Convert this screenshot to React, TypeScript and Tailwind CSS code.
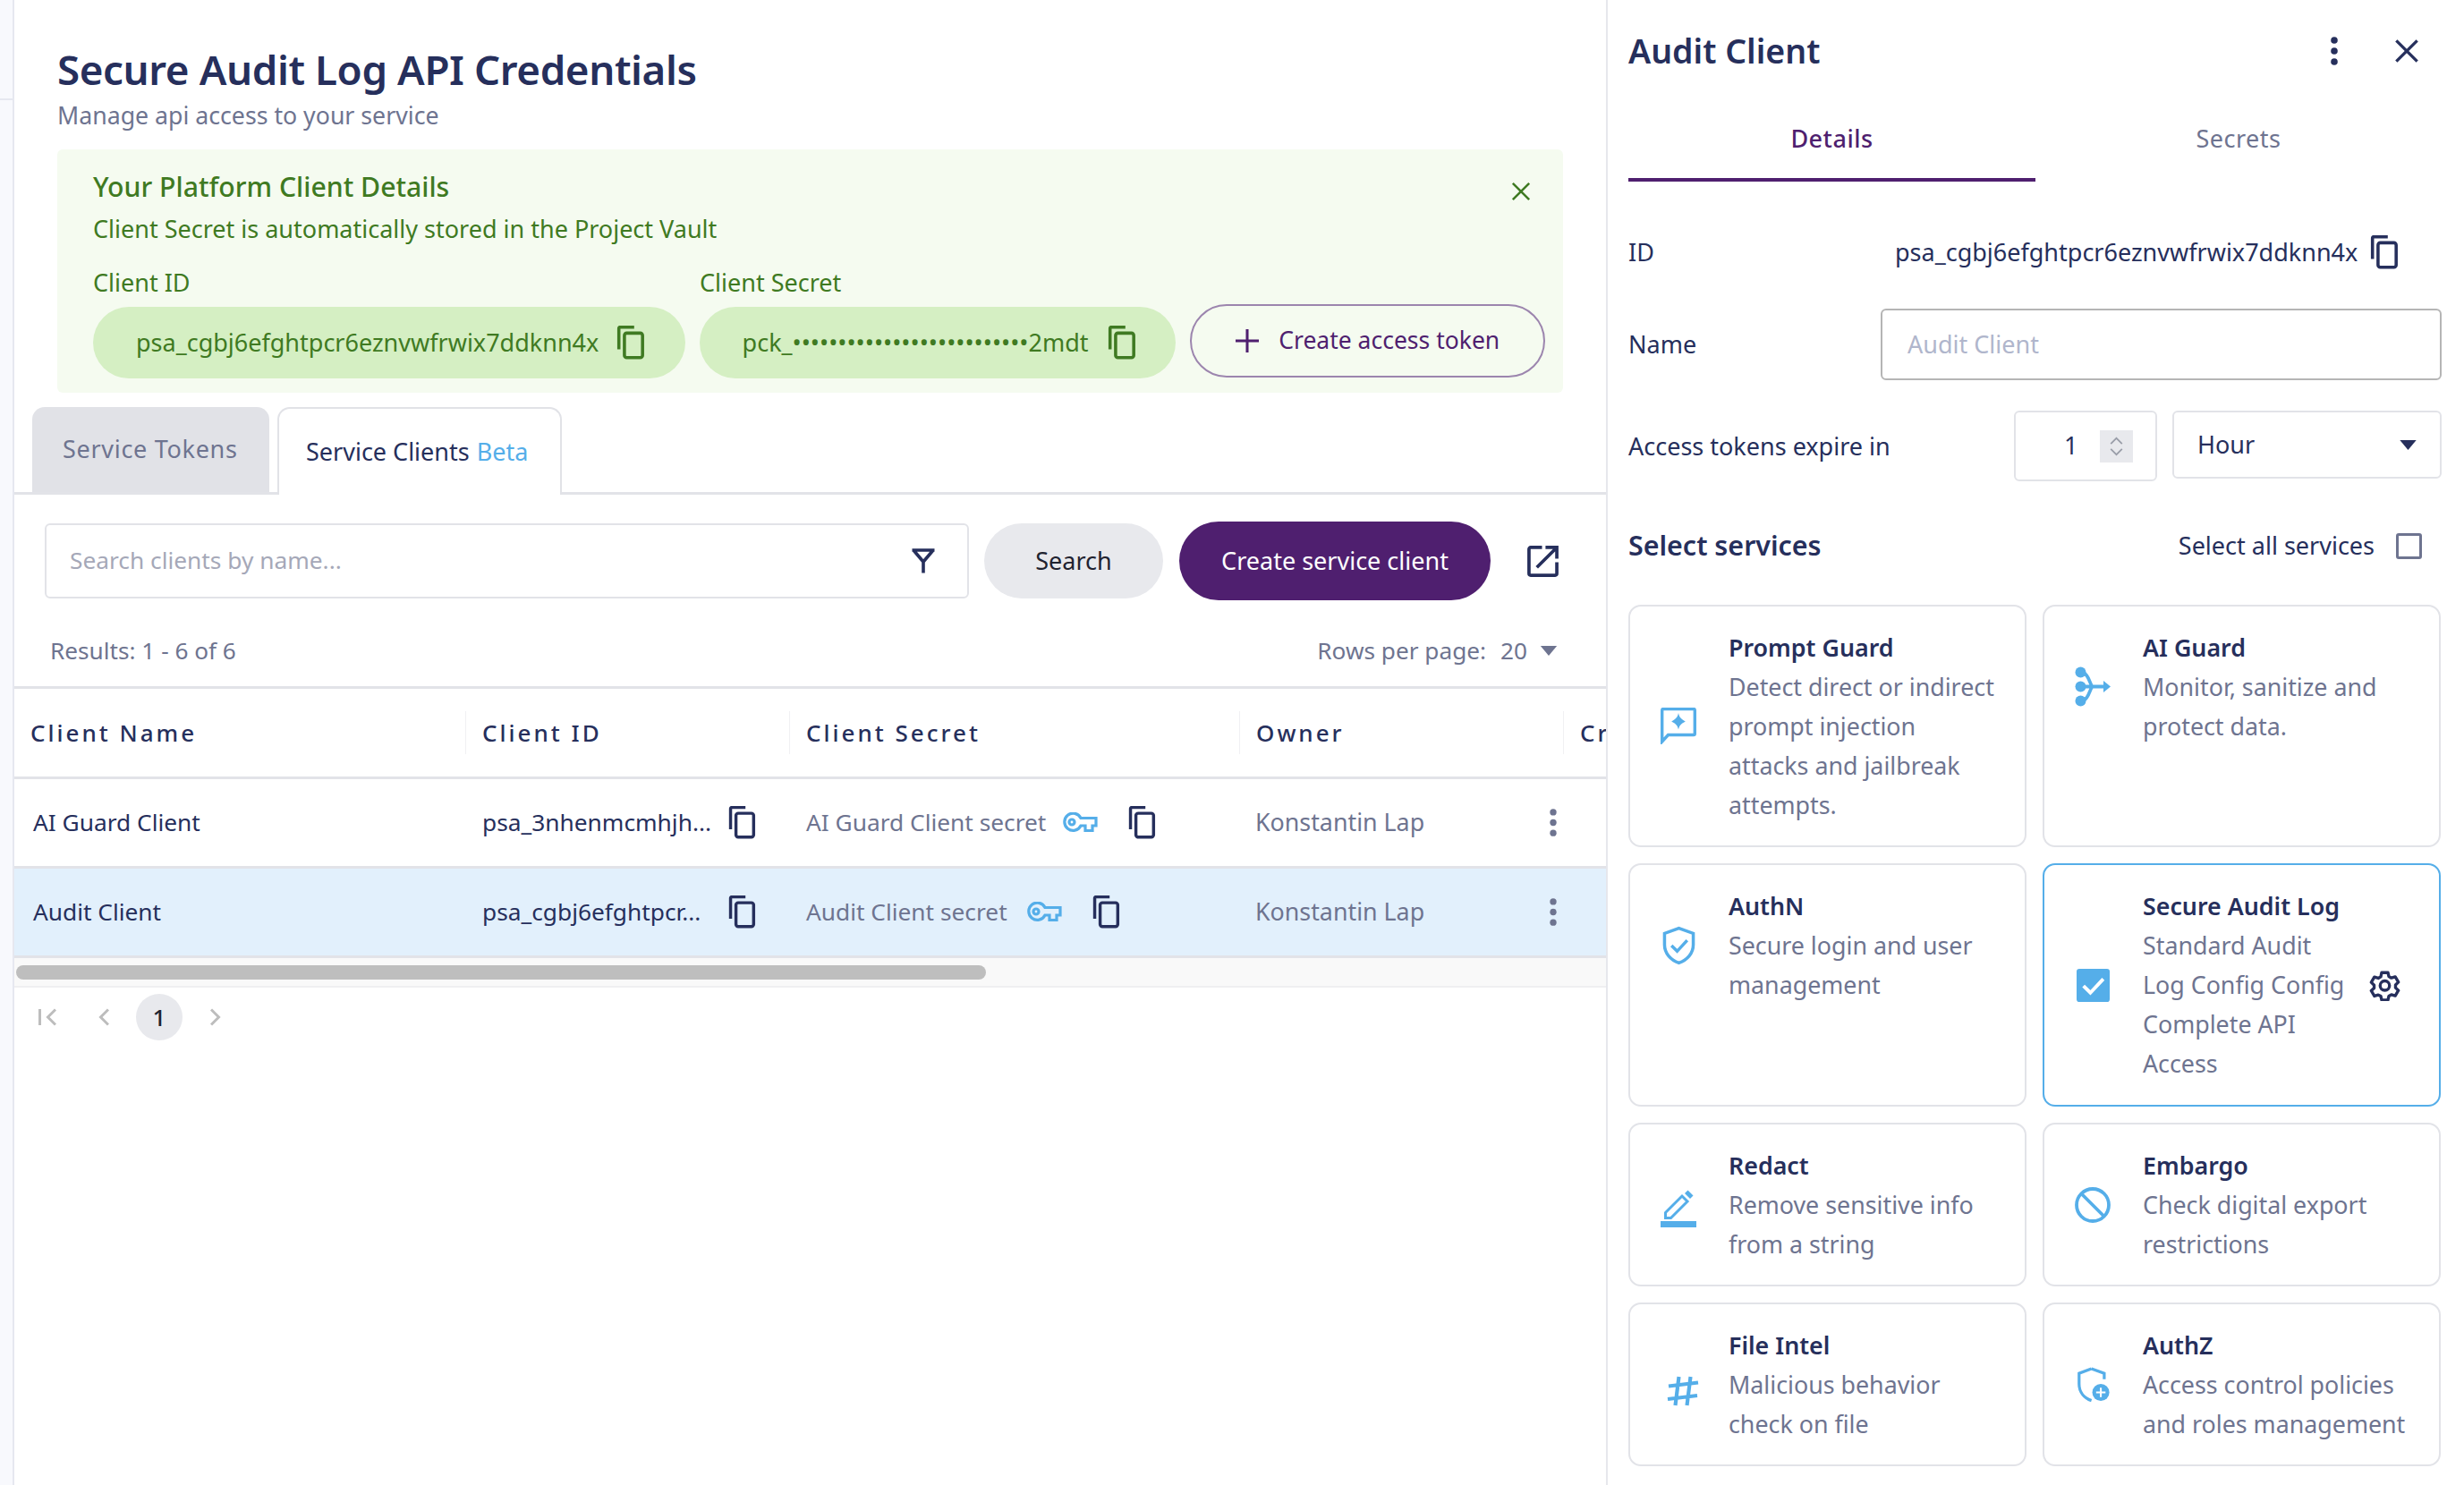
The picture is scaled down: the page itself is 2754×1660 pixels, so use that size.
import type { ReactNode } from "react";

type IconProps = { className?: string };

function CopyIcon({ className = "" }: IconProps) {
  return (
    <svg viewBox="0 0 24 30" fill="none" stroke="currentColor" strokeWidth="2.8" className={className}>
      <path d="M1.5 21V2.5a1.2 1.2 0 0 1 1.2-1.2H15" />
      <rect x="6.4" y="6.6" width="16" height="21.6" rx="2" />
    </svg>
  );
}

function KebabIcon({ className = "" }: IconProps) {
  return (
    <svg viewBox="0 0 8 32" fill="currentColor" className={className}>
      <circle cx="4" cy="4" r="3.8" />
      <circle cx="4" cy="16" r="3.8" />
      <circle cx="4" cy="28" r="3.8" />
    </svg>
  );
}

function CloseIcon({ className = "" }: IconProps) {
  return (
    <svg viewBox="0 0 24 24" fill="none" stroke="currentColor" strokeWidth="2.8" className={className}>
      <path d="M2 2l20 20M22 2L2 22" />
    </svg>
  );
}

function KeyIcon({ className = "" }: IconProps) {
  return (
    <svg viewBox="0 0 40 24" fill="none" stroke="#55aee9" strokeWidth="3.2" className={className}>
      <path d="M21 6.5h17V15h-4v5.5h-8V15h-5a9.6 9.6 0 1 1 0-8.5z" />
      <circle cx="11" cy="11" r="3" />
    </svg>
  );
}

function Caret({ className = "" }: IconProps) {
  return (
    <svg viewBox="0 0 20 12" fill="currentColor" className={className}>
      <path d="M0 0h20L10 12z" />
    </svg>
  );
}

// icons for the service cards, all in the same blue
function SparkChatIcon() {
  return (
    <svg viewBox="0 0 40 41" className="h-[41px] w-10" fill="none">
      <path d="M1.7 38V3a1.5 1.5 0 0 1 1.500-1.500h33.600A1.500 1.500 0 0 1 38.300 3v26a1.500 1.500 0 0 1-1.500 1.500H8.500z" stroke="#55aee9" strokeWidth="3.400" />
      <path d="M20 6c1 4.800 3 6.800 7.800 9.500-4.800 2.400-6.800 4.600-7.800 9-1-4.400-3-6.600-7.800-9C17 12.800 19 10.800 20 6z" fill="#55aee9" />
    </svg>
  );
}

function MergeIcon() {
  return (
    <svg viewBox="0 0 40 45" className="h-[45px] w-10" fill="none" stroke="#55aee9" strokeWidth="3.800">
      <circle cx="6.500" cy="6.500" r="6" fill="#55aee9" stroke="none" />
      <circle cx="6.500" cy="22.500" r="6" fill="#55aee9" stroke="none" />
      <circle cx="6.500" cy="38.500" r="6" fill="#55aee9" stroke="none" />
      <path d="M6.500 6.500c10 0 10 16 14 16M6.500 38.500c10 0 10-16 14-16M6.500 22.500H35" />
      <path d="M32 16l8 6.500-8 6.500z" fill="#55aee9" stroke="none" />
    </svg>
  );
}

function ShieldCheckIcon() {
  return (
    <svg viewBox="0 0 38 44" className="h-[44px] w-[37px]" fill="none" stroke="#55aee9" strokeWidth="3.600">
      <path d="M19 2l16.500 6v13c0 10-7 17.500-16.500 21C9.500 38.500 2.500 31 2.500 21V8z" />
      <path d="M10.500 22l6.500 6.500L28.500 16" />
    </svg>
  );
}

function CheckedBox() {
  return (
    <svg viewBox="0 0 36 36" className="h-[37px] w-[37px]">
      <rect width="36" height="36" rx="3" fill="#55aee9" />
      <path d="M7.500 18.500l7.500 7.500L29 11" fill="none" stroke="#fff" strokeWidth="3.800" />
    </svg>
  );
}

function RedactIcon() {
  return (
    <svg viewBox="0 0 40 44" className="mt-[6px] h-[44px] w-10" fill="none">
      <path d="M5.500 27.500L24 9l6 6-18.500 18.500H5.500z" stroke="#55aee9" strokeWidth="3" />
      <path d="M27 6l3.500-3.500 6 6L33 12z" fill="#55aee9" />
      <rect y="37" width="40" height="7" fill="#55aee9" />
    </svg>
  );
}

function BlockIcon() {
  return (
    <svg viewBox="0 0 40 40" className="h-10 w-10" fill="none" stroke="#55aee9" strokeWidth="3.800">
      <circle cx="20" cy="20" r="18" />
      <path d="M7.500 7.500l25 25" />
    </svg>
  );
}

function HashIcon() {
  return (
    <svg viewBox="0 0 36 36" className="mt-[14px] h-9 w-9" fill="none" stroke="#55aee9" strokeWidth="4.200">
      <path d="M13.500 2L9.500 34M26.500 2l-4 32M2 12.500l33-4M1 27l33-4" />
    </svg>
  );
}

function ShieldPlusIcon() {
  return (
    <svg viewBox="0 0 38 42" className="h-[40px] w-[37px]" fill="none">
      <path d="M17 2l15 5.500v7M17 2L2.500 7.500V20c0 9.500 6 16.500 14.500 19.500" stroke="#55aee9" strokeWidth="3.400" />
      <circle cx="28" cy="30" r="10" fill="#55aee9" />
      <path d="M28 24.500v11M22.500 30h11" stroke="#fff" strokeWidth="2.200" />
    </svg>
  );
}

function GearIcon() {
  return (
    <svg viewBox="0 0 24 24" className="h-[35px] w-[35px]" fill="none" stroke="#262f5c" strokeWidth="2.300" strokeLinejoin="round">
      <path d="M9.600 2.200h4.800l.7 3 1.900 1.100 3-.9 2.400 4.100-2.200 2.100v2.200l2.200 2.100-2.400 4.100-3-.9-1.900 1.100-.7 3H9.600l-.7-3L7 19.300l-3 .9-2.400-4.100 2.200-2.100v-2.200L1.600 9.700 4 5.600l3 .9 1.900-1.100z" />
      <circle cx="12" cy="12.200" r="3.600" />
    </svg>
  );
}

function ServiceCard({
  icon,
  title,
  lines,
  selected = false,
  extra,
  iconOffset = "",
}: {
  icon: ReactNode;
  title: string;
  lines: string[];
  selected?: boolean;
  extra?: ReactNode;
  iconOffset?: string;
}) {
  return (
    <div className={`flex rounded-[14px] border-2 bg-white ${selected ? "border-[#55aee9]" : "border-[#e2e3e8]"}`}>
      <div className={`flex w-[108px] shrink-0 justify-center ${iconOffset}`}>{icon}</div>
      <div className="flex-1 pl-[2px] pt-[24px] text-[26.800px] leading-[44px]">
        <div className="font-semibold text-[#262f5c]">{title}</div>
        {lines.map((l) => (
          <div key={l} className="whitespace-nowrap text-[#6e7490]">
            {l}
          </div>
        ))}
      </div>
      {extra}
    </div>
  );
}

const headCell = "flex h-[48px] items-center pl-[18px] text-[26px] font-medium tracking-[3px] text-[#262f5c]";

function ClientRow({
  name,
  id,
  secret,
  secretWidth,
  active = false,
}: {
  name: string;
  id: string;
  secret: string;
  secretWidth: string;
  active?: boolean;
}) {
  return (
    <div
      className={`grid h-[100px] grid-cols-[504px_362px_503px_362px_400px] items-center border-b-[3px] border-[#e2e3e8] text-[26.300px] ${active ? "bg-[#e2f0fc]" : "bg-white"}`}
    >
      <div className="pl-[21px] text-[#262f5c]">{name}</div>
      <div className="flex items-center pl-[19px] text-[#262f5c]">
        <span className="w-[275px] whitespace-nowrap">{id}</span>
        <CopyIcon className="h-[37px] w-[31px] text-[#262f5c]" />
      </div>
      <div className="flex items-center pl-[19px] text-[#6e7490]">
        <span className={`whitespace-nowrap ${secretWidth}`}>{secret}</span>
        <KeyIcon className="ml-[16px] h-[24px] w-[40px]" />
        <CopyIcon className="ml-[34px] h-[37px] w-[31px] text-[#262f5c]" />
      </div>
      <div className="flex items-center justify-between pl-[18px] pr-[7px] text-[26.800px] text-[#6e7490]">
        <span>Konstantin Lap</span>
        <KebabIcon className="h-[31px] w-[8px] text-[#6e7490]" />
      </div>
      <div />
    </div>
  );
}

export default function App() {
  return (
    <div className="flex h-[1660px] w-[2754px] overflow-hidden bg-white font-['Noto_Sans',sans-serif]">
      {/* thin nav rail */}
      <div className="w-[16px] shrink-0 border-r-2 border-[#e6e8f0] bg-[#f8f9fd]">
        <div className="mt-[110px] h-[2px] bg-[#e6e8f0]" />
      </div>

      {/* main column */}
      <div className="flex w-[1781px] shrink-0 flex-col overflow-hidden border-r-2 border-[#e6e7ec]">
        <div className="px-[48px] pt-[48px]">
          <h1 className="text-[45.700px] font-semibold leading-[58px] tracking-[-0.4px] text-[#262f5c]">
            Secure Audit Log API Credentials
          </h1>
          <p className="mt-[5px] text-[26.700px] leading-[36px] text-[#6e7490]">Manage api access to your service</p>

          <div className="mt-[20px] flex h-[272px] flex-col rounded-[6px] bg-[#f5fbf0] pl-[40px] pr-[20px] text-[#3f7a22]">
            <div className="flex items-start justify-between pr-[8px] pt-[22px]">
              <span className="text-[30.200px] font-medium leading-[40px]">Your Platform Client Details</span>
              <CloseIcon className="mr-[8px] mt-[14px] h-[22px] w-[22px]" />
            </div>
            <div className="mt-[7px] text-[27px] leading-[40px]">Client Secret is automatically stored in the Project Vault</div>
            <div className="mt-[20px] flex text-[27px] leading-[40px]">
              <span className="w-[678px]">Client ID</span>
              <span>Client Secret</span>
            </div>
            <div className="flex items-start">
              <div className="mt-[7px] flex h-[80px] w-[662px] items-center rounded-full bg-[#d5efc3] pl-[48px]">
                <span className="w-[537px] whitespace-nowrap text-[27px]">psa_cgbj6efghtpcr6eznvwfrwix7ddknn4x</span>
                <CopyIcon className="h-[38px] w-[32px]" />
              </div>
              <div className="ml-[16px] mt-[7px] flex h-[80px] w-[533px] items-center rounded-full bg-[#d5efc3] pl-[48px]">
                <span className="w-[408px] whitespace-nowrap text-[27px]">pck_••••••••••••••••••••••••••2mdt</span>
                <CopyIcon className="h-[38px] w-[32px]" />
              </div>
              <button className="ml-[16px] mt-[4px] flex h-[82px] w-[397px] items-center rounded-full border-2 border-[#9c85ae] pl-[49px] text-[26.500px] text-[#4f1f6f]">
                <svg viewBox="0 0 24 24" className="h-[26px] w-[26px]" fill="none" stroke="currentColor" strokeWidth="2.800">
                  <path d="M12 0v24M0 12h24" />
                </svg>
                <span className="ml-[22px] whitespace-nowrap">Create access token</span>
              </button>
            </div>
          </div>
        </div>

        {/* tabs */}
        <div className="mt-[16px] flex h-[98px] items-stretch gap-[9px] border-b-[3px] border-[#e2e3e8] pl-[20px] text-[27px]">
          <div className="flex w-[265px] items-center rounded-t-[14px] bg-[#e1e2e7] pl-[34px] tracking-[0.7px] text-[#6e7490]">
            Service Tokens
          </div>
          <div className="z-10 mb-[-3px] flex w-[318px] items-center rounded-t-[14px] border-2 border-b-0 border-[#e1e2e7] bg-white pl-[30px] text-[#262f5c]">
            Service Clients <span className="ml-[8px] text-[#55aee9]">Beta</span>
          </div>
        </div>

        {/* search row */}
        <div className="flex items-center pl-[34px] pt-[30px]">
          <div className="flex h-[84px] w-[1033px] items-center justify-between rounded-[6px] border-2 border-[#e2e3e8] pl-[26px] pr-[36px] text-[26.300px] text-[#a5a8b8]">
            <span>Search clients by name...</span>
            <svg viewBox="0 0 26 28" className="h-[28px] w-[26px]" fill="none" stroke="#262f5c" strokeWidth="3.600">
              <path d="M0.500 2h25M2 2l11 13v12.500M24 2L13 15" />
            </svg>
          </div>
          <button className="ml-[17px] h-[84px] w-[200px] rounded-full bg-[#e8e9ed] text-[27px] text-[#1f2330]">Search</button>
          <button className="ml-[18px] h-[88px] w-[348px] rounded-full bg-[#4f1f6f] text-[27px] text-white">Create service client</button>
          <svg viewBox="0 0 36 36" className="ml-[41px] h-[35px] w-[35px]" fill="none" stroke="#262f5c" strokeWidth="3.800">
            <path d="M17 2H4a2 2 0 0 0-2 2v28a2 2 0 0 0 2 2h28a2 2 0 0 0 2-2V19M11 25L34 2M21 2h13v13" />
          </svg>
        </div>

        {/* results row */}
        <div className="flex items-center justify-between pl-[40px] pr-[54px] pt-[36px] text-[26.200px] leading-[40px] text-[#6e7490]">
          <span>Results: 1 - 6 of 6</span>
          <span className="flex items-center">
            Rows per page:<span className="ml-[16px]">20</span>
            <Caret className="ml-[14px] h-[11px] w-[20px]" />
          </span>
        </div>

        {/* table */}
        <div className="mt-[20px] border-t-[3px] border-[#e2e3e8]">
          <div className="grid h-[101px] grid-cols-[504px_362px_503px_362px_400px] items-center border-b-[3px] border-[#e2e3e8]">
            <div className={headCell}>Client Name</div>
            <div className={`${headCell} border-l border-[#f0f0f3]`}>Client ID</div>
            <div className={`${headCell} border-l border-[#f0f0f3]`}>Client Secret</div>
            <div className={`${headCell} border-l border-[#f0f0f3]`}>Owner</div>
            <div className={`${headCell} border-l border-[#f0f0f3]`}>Created</div>
          </div>
          <ClientRow name="AI Guard Client" id="psa_3nhenmcmhjh..." secret="AI Guard Client secret" secretWidth="w-[270px]" />
          <ClientRow name="Audit Client" id="psa_cgbj6efghtpcr..." secret="Audit Client secret" secretWidth="w-[230px]" active />
        </div>
        <div className="flex h-[33px] items-start border-b-[2px] border-[#efeff1] bg-[#f9f9f9] pl-[2px] pt-[8px]">
          <div className="h-[16px] w-[1084px] rounded-full bg-[#bebebe]" />
        </div>

        {/* pagination */}
        <div className="flex items-center pl-[27px] pt-[7px] text-[#bdbdbd]">
          <svg viewBox="0 0 20 20" className="h-[20px] w-[20px]" fill="none" stroke="currentColor" strokeWidth="3">
            <path d="M1.500 1v18M19 1.500L10.500 10l8.500 8.500" />
          </svg>
          <svg viewBox="0 0 12 20" className="ml-[47px] h-[20px] w-[12px]" fill="none" stroke="currentColor" strokeWidth="3">
            <path d="M11 1.500L2.500 10l8.500 8.500" />
          </svg>
          <div className="ml-[30px] flex h-[52px] w-[52px] items-center justify-center rounded-full bg-[#e8e9ed] text-[26px] font-medium text-[#1f2330]">1</div>
          <svg viewBox="0 0 12 20" className="ml-[31px] h-[20px] w-[12px]" fill="none" stroke="currentColor" strokeWidth="3">
            <path d="M1 1.500L9.500 10 1 18.500" />
          </svg>
        </div>
      </div>

      {/* detail panel */}
      <div className="flex-1 pl-[23px] pr-[25px]">
        <div className="flex items-center justify-between pt-[30px]">
          <span className="text-[37.500px] font-semibold leading-[54px] text-[#262f5c]">Audit Client</span>
          <div className="flex items-center pr-[25px]">
            <KebabIcon className="h-[32px] w-[10px] text-[#262f5c]" />
            <CloseIcon className="ml-[62px] h-[28px] w-[28px] text-[#262f5c]" />
          </div>
        </div>
        <div className="mt-[51px] flex text-center text-[27px] tracking-[0.5px]">
          <div className="w-[455px] border-b-4 border-[#4f1f6f] pb-[24px] font-medium leading-[40px] text-[#4f1f6f]">Details</div>
          <div className="flex-1 leading-[40px] text-[#6e7490]">Secrets</div>
        </div>

        <div className="mt-[60px] flex h-[38px] items-center text-[27px] text-[#262f5c]">
          <span className="w-[298px]">ID</span>
          <span className="whitespace-nowrap">psa_cgbj6efghtpcr6eznvwfrwix7ddknn4x</span>
          <CopyIcon className="ml-[14px] h-[38px] w-[32px]" />
        </div>

        <div className="mt-[44px] flex items-center text-[27px]">
          <span className="w-[282px] text-[#262f5c]">Name</span>
          <div className="flex h-[80px] w-[627px] items-center rounded-[6px] border-2 border-[#b5b5b5] pl-[28px] text-[#b0b6cc]">Audit Client</div>
        </div>

        <div className="mt-[34px] flex items-start text-[27px] text-[#262f5c]">
          <span className="w-[431px] pt-[20px]">Access tokens expire in</span>
          <div className="flex h-[79px] w-[160px] items-center rounded-[6px] border-2 border-[#e2e3e8] pl-[54px]">
            <span className="w-[40px]">1</span>
            <div className="flex h-[36px] w-[37px] flex-col items-center justify-center gap-[4px] bg-[#e8e9ed] text-[#9a9ea9]">
              <svg viewBox="0 0 16 10" className="h-[9px] w-[15px]" fill="none" stroke="currentColor" strokeWidth="2"><path d="M1 9l7-7 7 7" /></svg>
              <svg viewBox="0 0 16 10" className="h-[9px] w-[15px]" fill="none" stroke="currentColor" strokeWidth="2"><path d="M1 1l7 7 7-7" /></svg>
            </div>
          </div>
          <div className="ml-[17px] flex h-[76px] w-[301px] items-center justify-between rounded-[6px] border-2 border-[#e2e3e8] pl-[26px] pr-[26px]">
            <span>Hour</span>
            <Caret className="h-[11px] w-[19px]" />
          </div>
        </div>

        <div className="mt-[52px] flex h-[40px] items-center justify-between pr-[22px]">
          <span className="text-[30.400px] font-semibold text-[#262f5c]">Select services</span>
          <span className="flex items-center text-[27px] text-[#262f5c]">
            Select all services
            <span className="ml-[24px] h-[29px] w-[29px] rounded-[3px] border-[3px] border-[#6e7490]" />
          </span>
        </div>

        <div className="mt-[46px] grid grid-cols-[445px_445px] grid-rows-[271px_272px_183px_183px] gap-[18px]">
          <ServiceCard
            title="Prompt Guard"
            lines={["Detect direct or indirect", "prompt injection", "attacks and jailbreak", "attempts."]}
            icon={<SparkChatIcon />}
            iconOffset="items-start pt-[113px]"
          />
          <ServiceCard
            title="AI Guard"
            lines={["Monitor, sanitize and", "protect data."]}
            icon={<MergeIcon />}
            iconOffset="items-start pt-[67px]"
          />
          <ServiceCard
            title="AuthN"
            lines={["Secure login and user", "management"]}
            icon={<ShieldCheckIcon />}
            iconOffset="items-start pt-[68px]"
          />
          <ServiceCard
            selected
            title="Secure Audit Log"
            lines={["Standard Audit", "Log Config Config", "Complete API", "Access"]}
            icon={<CheckedBox />}
            iconOffset="items-center"
            extra={
              <div className="flex items-center pr-[43px]">
                <GearIcon />
              </div>
            }
          />
          <ServiceCard
            title="Redact"
            lines={["Remove sensitive info", "from a string"]}
            icon={<RedactIcon />}
            iconOffset="items-center"
          />
          <ServiceCard
            title="Embargo"
            lines={["Check digital export", "restrictions"]}
            icon={<BlockIcon />}
            iconOffset="items-center"
          />
          <ServiceCard
            title="File Intel"
            lines={["Malicious behavior", "check on file"]}
            icon={<HashIcon />}
            iconOffset="items-center pl-[10px]"
          />
          <ServiceCard
            title="AuthZ"
            lines={["Access control policies", "and roles management"]}
            icon={<ShieldPlusIcon />}
            iconOffset="items-center"
          />
        </div>
      </div>
    </div>
  );
}
